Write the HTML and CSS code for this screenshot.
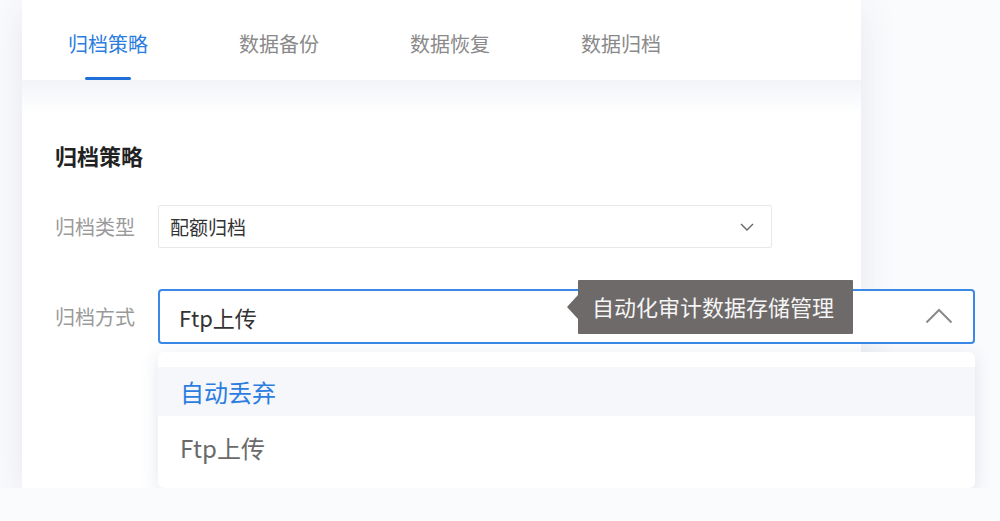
FILE: index.html
```html
<!DOCTYPE html>
<html lang="zh-CN">
<head>
    <meta charset="UTF-8">
    <meta name="viewport" content="width=device-width, initial-scale=1.0">
    <title>归档策略</title>
    <link rel="stylesheet" href="styles.css">
</head>
<body>
    <div class="card">
        <nav class="tabs">
            <a class="tab active" href="#">归档策略</a>
            <a class="tab" href="#">数据备份</a>
            <a class="tab" href="#">数据恢复</a>
            <a class="tab" href="#">数据归档</a>
        </nav>

        <section class="content">
            <h2 class="title">归档策略</h2>

            <div class="form-row">
                <label class="form-label">归档类型</label>
                <div class="select select-small">
                    <span class="select-value">配额归档</span>
                    <svg class="arrow-down" width="14" height="8" viewBox="0 0 14 8">
                        <path d="M1 1 L7 7 L13 1" fill="none" stroke="#666" stroke-width="1.4"/>
                    </svg>
                </div>
            </div>

            <div class="form-row row-open">
                <label class="form-label">归档方式</label>
                <div class="select select-open">
                    <span class="select-value">Ftp上传</span>
                    <svg class="arrow-up" width="28" height="16" viewBox="0 0 28 16">
                        <path d="M1.5 14.5 L14 2 L26.5 14.5" fill="none" stroke="#8a8a8a" stroke-width="2"/>
                    </svg>

                    <!-- hover tooltip -->
                    <div class="tooltip">自动化审计数据存储管理</div>

                    <!-- open dropdown -->
                    <ul class="dropdown">
                        <li class="option selected">自动丢弃</li>
                        <li class="option">Ftp上传</li>
                    </ul>
                </div>
            </div>
        </section>
    </div>
</body>
</html>
```

FILE: styles.css
```css
body {
    margin: 0;
    padding: 0;
    background-color: #fafbfd;
    font-family: "Noto Sans CJK SC", "Noto Sans", sans-serif;
}
.card {
    width: 839px;
    margin-left: 22px;
    background-color: white;
    box-shadow: 0 8px 36px rgba(40, 60, 110, 0.1);
}
.tabs {
    display: flex;
    gap: 91px;
    height: 80px;
    padding-left: 46px;
}
.tab {
    position: relative;
    display: block;
    width: 80px;
    line-height: 88px;
    height: 80px;
    font-size: 20px;
    color: #8a8a8a;
    text-decoration: none;
    text-align: center;
}
.tab.active {
    color: #2b7de0;
}
.tab.active::after {
    content: "";
    position: absolute;
    left: 17px;
    bottom: 0;
    width: 46px;
    height: 3px;
    border-radius: 2px;
    background-color: #1f6fd9;
}
.content {
    padding: 61px 0 144px 33px;
    background: linear-gradient(#f2f4f8, #ffffff 34px);
}
.title {
    margin: 0 0 36px 0;
    font-size: 22px;
    line-height: 28px;
    font-weight: bold;
    color: #222;
}
.form-row {
    display: flex;
    align-items: center;
}
.form-row + .form-row {
    margin-top: 41px;
}
.form-label {
    flex-shrink: 0;
    width: 103px;
    font-size: 20px;
    color: #9a9a9a;
}
.select {
    position: relative;
    flex-shrink: 0;
    display: flex;
    align-items: center;
    justify-content: space-between;
    box-sizing: border-box;
    background-color: white;
}
.select-small {
    width: 614px;
    height: 43px;
    padding: 0 17px 0 11px;
    border: 1px solid #e6e8ec;
    border-radius: 2px;
}
.select-small .select-value {
    font-size: 19px;
    color: #333;
}
.select-open {
    width: 817px;
    height: 55px;
    padding: 0 20px 0 19px;
    border: 2px solid #3a89e6;
    border-radius: 4px;
}
.select-open .select-value {
    font-size: 22px;
    color: #333;
}
.arrow-up {
    margin-top: -2px;
}
.tooltip {
    position: absolute;
    left: 418px;
    top: -11px;
    width: 275px;
    height: 54px;
    box-sizing: border-box;
    padding-left: 14px;
    line-height: 52px;
    font-size: 22px;
    color: #f5f5f5;
    background-color: #6e6a69;
    border-radius: 1px;
}
.tooltip::before {
    content: "";
    position: absolute;
    left: -11px;
    top: 15px;
    border-top: 12px solid transparent;
    border-bottom: 12px solid transparent;
    border-right: 11px solid #6e6a69;
}
.dropdown {
    position: absolute;
    left: -2px;
    top: 61px;
    width: 817px;
    height: 136px;
    box-sizing: border-box;
    margin: 0;
    padding: 15px 0 0 0;
    list-style-type: none;
    background-color: white;
    border-radius: 6px;
    box-shadow: 0 4px 18px rgba(40, 60, 110, 0.13);
}
.option {
    height: 49px;
    line-height: 49px;
    padding-left: 22px;
    font-size: 24px;
    color: #6a6a6a;
}
.option + .option {
    height: 64px;
    line-height: 64px;
}
.option.selected {
    color: #2b7de0;
    background-color: #f5f7fb;
}
```
